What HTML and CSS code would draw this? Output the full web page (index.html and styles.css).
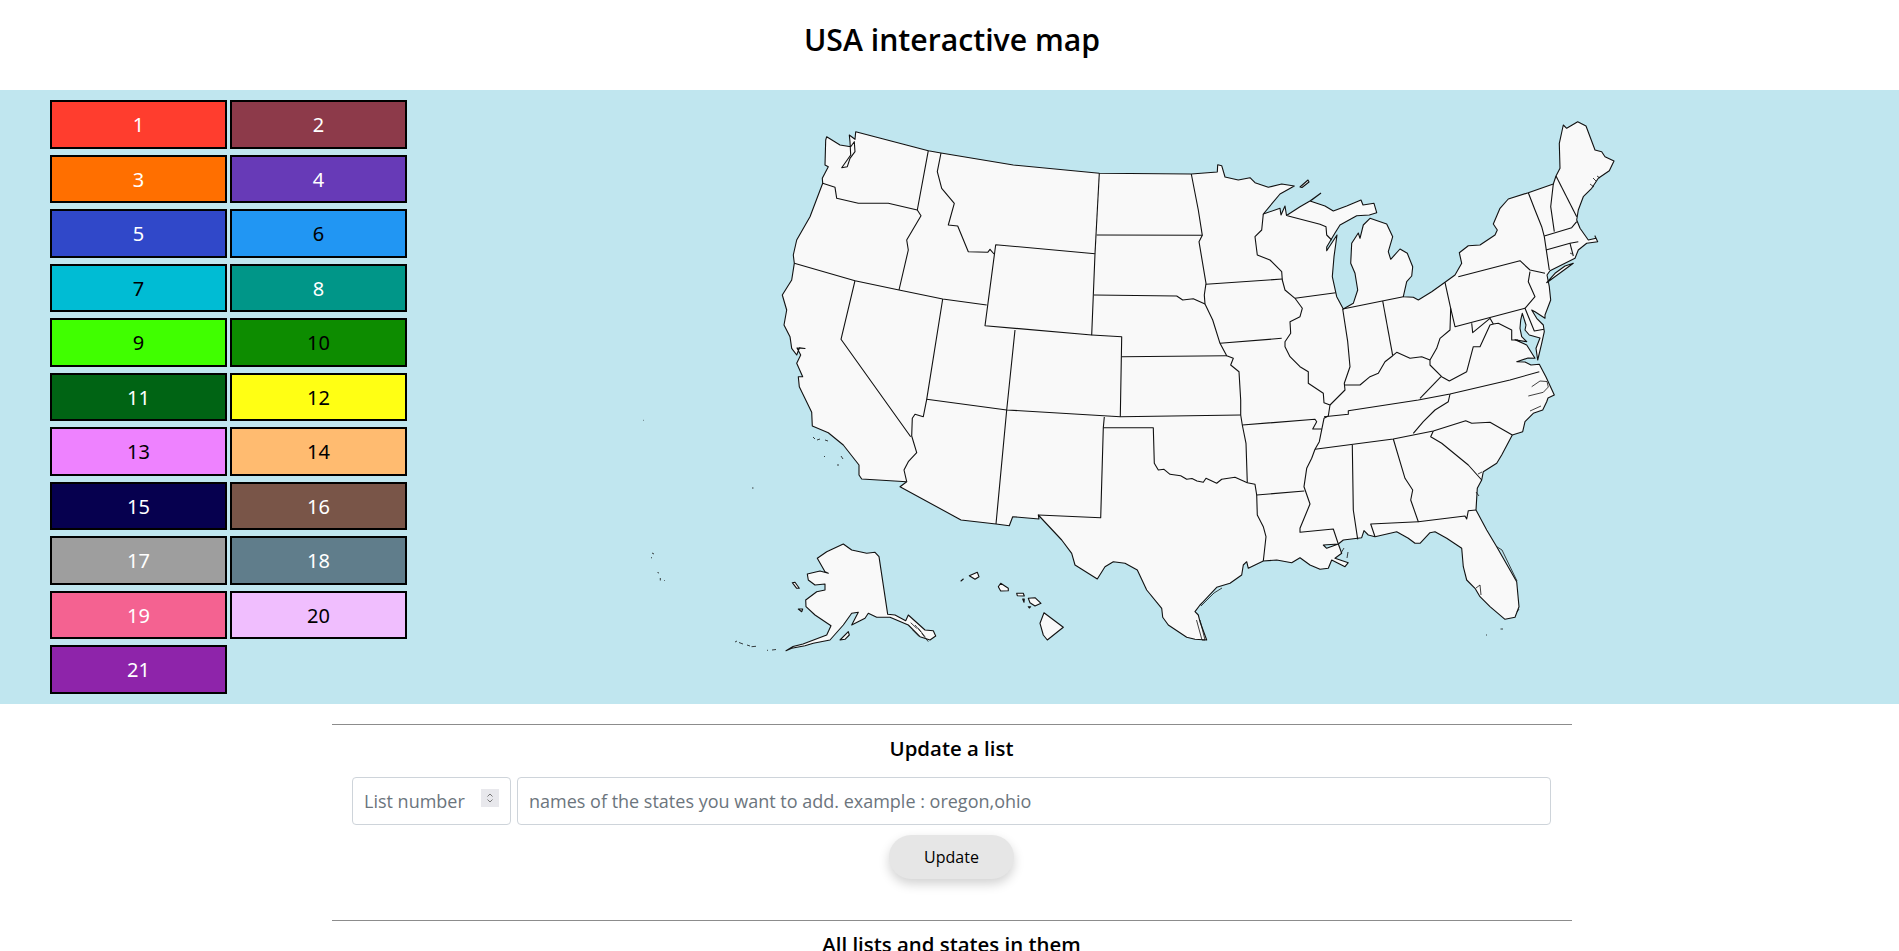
FILE: index.html
```html
<!DOCTYPE html>
<html lang="en">
<head>
    <meta charset="UTF-8">
    <meta name="viewport" content="width=device-width, initial-scale=1.0">
    <title>USA interactive map</title>
    <link rel="stylesheet" href="styles.css">
</head>
<body>
    <header class="page-title">
        <h1>USA interactive map</h1>
    </header>

    <div class="map-band">
        <div class="legend">
            <button class="list-btn c1">1</button>
            <button class="list-btn c2">2</button>
            <button class="list-btn c3">3</button>
            <button class="list-btn c4">4</button>
            <button class="list-btn c5">5</button>
            <button class="list-btn c6">6</button>
            <button class="list-btn c7">7</button>
            <button class="list-btn c8">8</button>
            <button class="list-btn c9">9</button>
            <button class="list-btn c10">10</button>
            <button class="list-btn c11">11</button>
            <button class="list-btn c12">12</button>
            <button class="list-btn c13">13</button>
            <button class="list-btn c14">14</button>
            <button class="list-btn c15">15</button>
            <button class="list-btn c16">16</button>
            <button class="list-btn c17">17</button>
            <button class="list-btn c18">18</button>
            <button class="list-btn c19">19</button>
            <button class="list-btn c20">20</button>
            <button class="list-btn c21">21</button>
        </div>

        <svg class="usa-map" viewBox="620 90 1030 613.5" width="1030" height="613.5">
            <!-- lower 48 outline, clockwise from the Washington / Canada corner -->
            <path class="land" d="M855.7 131.7 L928.3 150.7 941 153 1013.3 165 1099.3 173.3 1191.3 174 1217.3 172 1217.7 164.7 1221.7 165.7 1225 177 1238.3 180 1250 177.7 1255 182.7 1268.3 187.3 1281.7 184 1294.3 186 1280 194 1263.3 214 1280 208.3 1281 215 1285 206 1286.5 215.5 1300 206.7 1311.7 200 1320.7 193.3 1310 201 1325 206 1333.3 211 1346.7 206 1361 200 1363 205 1374 203.3 1376.7 212.7 1369.3 215 1356.7 215.7 1340 225 1335 233 1326.7 247 1326.7 250.7 1337 235 1334 256.7 1332.3 276.7 1336.7 296.7 1343.3 309 1353.3 303.3 1357.7 290 1355 273.3 1350.7 263.3 1351.7 243.3 1358.3 233 1360 238.3 1363.3 225 1370 218.3 1386.7 224 1392.7 236.7 1388.3 251.7 1390.7 259.3 1400 249 1407.3 253.3 1412.7 266.7 1411.7 276 1406.7 281.7 1403.3 296.7 1413.3 297.3 1418.3 300 1431.7 291.7 1445 282.3 1455 275 1461.7 263.3 1459.3 252.7 1468.3 245.7 1480 245 1495 235 1497.3 230 1493.3 224 1500 208.3 1508.3 199 1528.3 192.7 1553.3 184 1556 176 1560 168.3 1559.3 143.3 1563.3 125 1566.7 128.3 1577.7 121.7 1586 126 1595 150 1601.7 151.7 1605 156.7 1614 161 1609.3 170.7 1598.3 178.3 1591.7 188.3 1583.3 196.7 1578.3 210 1576.7 220 1580 228.3 1588.3 240 1596 238.3 1595 236 1597.7 241.7 1586.7 243.3 1578.3 250 1575 258.3 1550 270.7 1547 275 1549.3 286.7 1550.7 300 1545 315 1545 318.3 1535 311.7 1531.7 310 1536.7 318.3 1543.3 325 1544.3 331.7 1541.7 343.3 1537.7 360 1536 348.3 1540 338 1529.3 335 1525 330 1526 325 1522.3 313.3 1520.7 320 1520 328.3 1521.7 336.7 1526.7 341.7 1515 339.7 1526.7 345 1531.7 353 1535 358.3 1528 358 1516.7 361.7 1525 362 1531 365 1539.3 364.3 1546 377 1554.3 395 1548 398 1546.7 401.7 1542.7 410 1533.3 413.3 1525 421.7 1522.7 431.7 1512.3 435 1501.7 455 1496.7 463.3 1483.3 471.7 1481.7 480 1477.3 488.3 1476 510 1486.7 530 1496.7 546.7 1516.7 581.7 1519 606.7 1515 617.3 1505 619.3 1490 606.7 1480 596.7 1475 588.3 1466.7 580 1463.3 566.7 1461.7 548.3 1446.7 538.3 1435 531.7 1430 532.7 1420 543.3 1415 543.3 1408.3 538.3 1396.7 531.7 1375 536.7 1368.3 535 1364 530.7 1361.7 537.7 1343.3 540 1338.3 544 1323.3 545 1326.7 548.3 1338.3 544 1341.7 553.3 1335 558.3 1348.3 562.7 1345 566.7 1331.7 560 1328.3 568.3 1320 569.3 1310 565 1300 557.7 1291.7 562.7 1276.7 560 1263.3 561 1248.3 568.3 1246.7 561.7 1243.3 565 1241.7 575 1230 583.3 1216.7 587.3 1203.3 601.7 1200 605 1195 611.7 1198.3 615 1200 621.7 1206.7 640 1195 639.3 1186.7 637.3 1168.3 625 1162.7 617.3 1161.7 608.3 1146.7 590 1137.3 570 1125 563.3 1113.3 561.7 1105 566.7 1097.3 579 1075 565 1071.7 553.3 1061.7 540 1038.3 515 1039 519 1012.7 516.7 1009.3 525.7 996 524 961 520 900 486.7 906.7 481.7 861.7 479 859 475 859 465 843.3 445 828.3 432.7 812.3 426 811.7 412.3 799.3 386.7 798.3 376.7 802.7 376.7 796.7 363.3 800.7 355 797 348 805 348.5 799.5 347.7 796.7 355 791.7 348.3 790 336.7 784 325 786.7 310 782.3 295 791.7 280 794.3 263.3 793.3 255 796.7 240 810 216.7 822.7 183.3 822.3 178.3 828.3 166.7 825 165 825.7 140 826.7 136.7 840 145 850.7 146.7 854.3 141.7 855 151.7 850 158.3 847.3 166.7 841.7 167.7 850.7 155 850 141.7 849.3 135 855 139.3 Z"/>
            <!-- Alaska, Hawaii and the bigger islands -->
            <path class="land" d="M817.3 558.3 L826.7 551.7 843.3 544 851.7 550 866.7 553.3 875 552.3 879 556.7 887.7 614.3 895 615 905.7 620.7 908.3 615 925 630 933.3 630.7 935.7 636 930 640 920 636.7 908.3 625 890 617.3 876.7 617.3 868.3 613.3 865 618.3 851.7 625 858.3 612.3 851.7 613.3 843.3 625 830 640 813.3 643.3 805 645.7 791.7 648.3 786 650.7 793 646.5 803 644 826.7 635 831 625.7 815 615 806 606.7 805.7 600 816.7 591.7 825 590 825 584 815 585 808.3 580 807.3 574 820 571 828.3 573.3 825 571.7 817.3 558.3 Z"/>
            <path class="land" d="M840 640 L848.3 631.7 849.3 635 845 639.3 Z M792.3 582.7 L795 582.3 799.3 588.3 796.7 588.3 Z M798.3 609 L802.7 609 801.7 611.7 Z"/>
            <path class="land" d="M1044 612.7 L1063.3 627.3 1047.3 640 1043.3 635 1040 623.3 Z M1028.3 598.3 L1035 597.7 1041 603.3 1035 606 1030 602.7 Z M1016.7 593.3 L1023.3 593.3 1024.3 596 1017.3 595.7 Z M1022.7 599 L1024.3 599 1024 602.3 Z M1028.3 606.7 L1030.7 606.7 1029.3 608 Z M1000.7 583.3 L1008.3 588.3 1008.3 590.7 1000.7 591 998.3 586.7 Z M969.3 575.7 L977.3 572.3 979 576.7 975 579.3 Z M961 581 L963.3 579 Z"/>
            <path class="land" d="M1300 187 L1308 180 1309 182 1302 187.5 Z M1546.7 282.7 L1573.3 263.3 1565 266 1555 273.3 Z"/>

            <!-- state borders -->
            <g class="border">
                <path d="M822.7 183.3 L835 187.3 836.7 198.3 858.3 203.3 888.3 203.3 917.3 210"/>
                <path d="M928.3 150.7 L917.3 210 921 215.7 906.7 240 908.3 250 899 290"/>
                <path d="M941 153 L937.3 171.7 941.7 188.3 954.3 203.3 948.3 225 957.7 226 968.3 251.7 987.7 252.3 990 249.3 994 254"/>
                <path d="M995.7 244.7 L1095 253.7 1091.7 335 985 325.7 Z"/>
                <path d="M794.3 263.3 L855 280.7 899 290 942.7 299 986.7 305"/>
                <path d="M855 280.7 L841 339.3 910.7 436.7"/>
                <path d="M942.7 299 L926.7 399.3 923.3 416.7 915 414.3 912.3 418.3 911.7 436 916.7 452.7 908.3 461.7 904 470 906.7 481.7"/>
                <path d="M926.7 399.3 L1006.7 410 1120.3 416.7 1240.7 415"/>
                <path d="M1015 330 L1006.7 410 996 524"/>
                <path d="M1091.7 335 L1121.7 336.7 1120.3 416.7"/>
                <path d="M1104.3 417 L1103.3 427.7 1100.7 517.7 1038.3 515"/>
                <path d="M1103.3 427.7 L1153.3 427.7 1154.3 463.3 1158.3 470 1164 469.3 1170 474.3 1180.7 475.7 1186.7 479.3 1192 478.5 1197 481 1203.3 482.3 1206 478.3 1216.7 483.3 1221.7 479.3 1235 477.3 1247.3 482.7 1255 484.3 1256.7 495 1257.3 515 1263.3 526.7 1266 536.7 1263.3 561"/>
                <path d="M1240.7 415 L1242.3 425 1246 443.3 1247.3 482.7"/>
                <path d="M1256.7 495 L1304.3 491"/>
                <path d="M1242.3 425 L1315 419.3 1316.7 421.7 1312.7 429 1321.7 429"/>
                <path d="M1220 343.3 L1281.7 338.3"/>
                <path d="M1121.7 356.7 L1226.7 355.7"/>
                <path d="M1094 295 L1176.7 296 1182.7 300 1193.3 298.7 1205 304"/>
                <path d="M1096.7 235 L1202.3 235.3"/>
                <path d="M1099.3 173.3 L1095 253.7"/>
                <path d="M1191.3 174 L1198.3 210 1202.3 235.3 1199 241.7 1206 283.3 1204.3 295 1205 304 1212.7 320 1220 343.3 1226.7 355.7 1233.3 358.3 1230.7 365 1239 371.7 1240.7 400 1240.7 415"/>
                <path d="M1206 284.3 L1282.3 279"/>
                <path d="M1263.3 214 L1261.7 230 1255 236.7 1257.3 255 1270 260 1281.7 271.7 1282.3 280 1285 290 1295 298.3 1302.3 308.3 1300 316.7 1290 321.7 1290.7 333.3 1285 341.7 1285 346.7 1290 356.7 1300 366.7 1308.3 371.7 1308.3 383.3 1323.3 393.3 1324 402.7 1330 405 1328.3 416 1324 418.3 1319.3 441.7 1315 449.3 1311.7 458.3 1306.7 468.3 1304 486.7 1310 504 1300 528.3 1300 532.3 1333.3 529 1338.3 544"/>
                <path d="M1295 298.3 L1335.7 292.7"/>
                <path d="M1287.3 215.7 L1320 224.3 1326 226.7 1326.7 235 1331.7 240"/>
                <path d="M1342.7 309 L1347.7 341.7 1350 366.7 1344.3 383.3 1345 390 1340 395 1330 405"/>
                <path d="M1344.3 385 L1360 385 1370 376.7 1378.3 373.3 1385 361.7 1392.7 355.7 1396.7 352.3 1410 358.3 1421.7 356.7 1430 360"/>
                <path d="M1342.7 309 L1403.3 296.7"/>
                <path d="M1382.7 301 L1392.7 355.7"/>
                <path d="M1445 282.3 L1450.7 308.3 1450 330 1440 338.3 1436.7 348.3 1430 360 1430 365 1441.7 376.7 1449.3 381 1466.7 371.7 1473.3 346.7 1480 346.7 1490 325 1493.3 324"/>
                <path d="M1450.7 308.3 L1455 326.7 1525 308.3"/>
                <path d="M1458.3 276.7 L1520 260.7 1530 270 1545 273.3"/>
                <path d="M1530 271.7 L1528.3 281.7 1535 296.7 1525 308.3 1534.3 331 1544 329.3"/>
                <path d="M1471.7 323.3 L1472.7 332.7 1490 318.3 1493.3 324 1498.3 323.3 1511.7 330 1511.7 340 1518 340"/>
                <path d="M1528.3 192.7 L1535 210 1541.7 226.7 1544.3 236.7 1549.3 270"/>
                <path d="M1553.3 184 L1550.7 206.7 1554.3 231.7"/>
                <path d="M1556 176 L1576.7 216.7"/>
                <path d="M1544.3 236 L1571.7 227.7 1576.7 221.7"/>
                <path d="M1546 250 L1570 243.3 1578.3 241.7"/>
                <path d="M1570 243.3 L1573.3 256"/>
                <path d="M1324 416.7 L1348.3 414.3 1348.3 410.7 1418.3 400 1450 394 1510 380 1539.3 371.7"/>
                <path d="M1441 376.7 L1420 398.3"/>
                <path d="M1450 394 L1448.3 401.7 1435 410 1423.3 421.7 1413.3 433.3"/>
                <path d="M1315 449.3 L1393.3 439 1433.3 431 1465.7 420.7 1471.7 423.3 1490 422.3 1512.3 435"/>
                <path d="M1433.3 431 L1430.7 436.7 1441.7 443.3 1468.3 465 1481.7 480"/>
                <path d="M1352.3 445 L1353.3 510 1357.7 539.3"/>
                <path d="M1393.3 439 L1405 478.3 1412.7 490 1410.7 500 1418.3 521.7 1465 516 1466.7 519 1468.3 510.7 1476 510"/>
                <path d="M1418.3 521.7 L1370.7 524 1375 536.7"/>
            </g>

            <!-- sounds, barrier islands, keys, small specks -->
            <g class="border fine">
                <path d="M1531.7 386.7 L1540 381 1547 381.5 1548.3 387 1543.3 392.3 1528.3 396"/>
                <path d="M1530 411 L1541 406"/>
                <path d="M1196.5 620 L1202 640 1205 640 1200 620"/>
                <path d="M1496.7 546.7 L1502 550 1517 581"/>
                <path d="M1201 606 L1214 593 1222 588"/>
                <path d="M1476 492 L1479 496 M1478 474 L1482 472"/>
                <path d="M1476 588 L1480 585 1481 595"/>
                <path d="M1341 553 L1344 548 M1348 552 L1347 558"/>
                <path d="M910.7 622.7 L916.7 628.3 M912.7 630 L919.3 636.7 M918.3 628.3 L925 636.7 M921.7 633.3 L928.3 641.7 M915 625 L921 632"/>
                <path d="M813 437 L815 439 M817 440 L820 439 M825 440 L828 441 M824 456 L825 457 M841 456 L843 459 M838 464 L838 466"/>
                <path d="M1517 612 L1519 609 M1570 253 L1572 254"/>
                <path d="M1593 178 L1596 181 M1590 184 L1594 187 M1597 176 L1600 178"/>
                <path d="M652 553 L654 554 M651 557.5 L652 558 M657.5 572.5 L659 573 M660.3 578 L660.3 580.5 M664 580.5 L664.7 580.5"/>
                <path d="M735 642 L737 641 M739 642.5 L743 644 M747 645 L750 646 M751.5 646.7 L756 646.3 M767 650.3 L768 650.3 M772 650 L776 649.5"/>
                <path d="M643 420.3 L643.6 420.3 M752 488 L753.5 488"/>
                <path d="M1500.5 629 L1503 629 M1486 635 L1487 635"/>
            </g>
        </svg>
    </div>

    <main class="panel">
        <section class="panel-section update-section">
            <h3>Update a list</h3>
            <div class="update-row">
                <input class="field field-number" type="number" placeholder="List number">
                <input class="field field-states" type="text" placeholder="names of the states you want to add. example : oregon,ohio">
            </div>
            <button class="update-btn">Update</button>
        </section>

        <section class="panel-section">
            <h3>All lists and states in them</h3>
        </section>
    </main>
</body>
</html>
```

FILE: styles.css
```css
* {
    box-sizing: border-box;
}

body {
    margin: 0;
    font-family: 'Open Sans', sans-serif;
    color: #000;
    background: #fff;
}

/* Title */
.page-title {
    height: 90px;
    padding: 20px 0 0 5px;
    text-align: center;
}

.page-title h1 {
    margin: 0;
    font-size: 30.2px;
    font-weight: 600;
    line-height: 40px;
}

/* Map band */
.map-band {
    display: flex;
    height: 613.5px;
    background: #c0e6ef;
}

.legend {
    display: grid;
    grid-template-columns: 177px 177px;
    grid-auto-rows: 48.5px;
    column-gap: 3px;
    row-gap: 6px;
    align-content: start;
    padding: 10px 0 0 50px;
}

.list-btn {
    border: 2px solid #000;
    border-radius: 0;
    padding: 1px 0 0;
    font-family: 'Noto Sans', sans-serif;
    font-size: 20px;
    color: #fff;
    cursor: pointer;
}

.c1 { background: #ff3d2e; }
.c2 { background: #8d3a4a; }
.c3 { background: #ff6f00; }
.c4 { background: #673ab7; }
.c5 { background: #3048c9; }
.c6 { background: #2196f3; color: #000; }
.c7 { background: #00bcd4; color: #000; }
.c8 { background: #009688; }
.c9 { background: #40ff00; color: #000; }
.c10 { background: #0d8c00; color: #000; }
.c11 { background: #006414; }
.c12 { background: #ffff14; color: #000; }
.c13 { background: #ee82ff; color: #000; }
.c14 { background: #ffbb70; color: #000; }
.c15 { background: #06004f; }
.c16 { background: #795548; }
.c17 { background: #9e9e9e; }
.c18 { background: #607d8b; }
.c19 { background: #f46291; }
.c20 { background: #f0befe; color: #000; }
.c21 { background: #8e24aa; }

.usa-map {
    display: block;
    flex: none;
    margin-left: 213px;
}

.land {
    fill: #f9f9f9;
    stroke: #111;
    stroke-width: 1.1;
    stroke-linejoin: round;
}

.border {
    fill: none;
    stroke: #111;
    stroke-width: 1.1;
    stroke-linejoin: round;
}

.border.fine {
    stroke-width: 0.8;
}

/* Form part under the map */
.panel {
    width: 1240px;
    margin-left: 332px;
    padding-top: 20px;
}

.panel-section {
    border-top: 1px solid #8c8c8c;
    padding: 10px 21px 0 20px;
    text-align: center;
}

.panel-section h3 {
    margin: 0;
    font-size: 20.4px;
    font-weight: 600;
    line-height: 27px;
}

.update-section {
    height: 196px;
}

.update-row {
    display: flex;
    gap: 6px;
    margin-top: 15px;
}

.field {
    height: 48px;
    padding: 6px 11px;
    border: 1px solid #ced4da;
    border-radius: 4px;
    font-family: 'Open Sans', sans-serif;
    font-size: 18px;
    color: #495057;
    background: #fff;
}

.field::placeholder {
    color: #6c757d;
}

.field-number {
    width: 159px;
}

/* always visible spinner, grey box with two small chevrons */
.field-number::-webkit-inner-spin-button {
    -webkit-appearance: none;
    appearance: none;
    width: 18px;
    height: 18px;
    opacity: 1;
    background: #e8e8ec url("data:image/svg+xml,%3Csvg xmlns='http://www.w3.org/2000/svg' width='18' height='18'%3E%3Cpath d='M6.5 7.5 9 5l2.500 2.500M6.500 10.500 9 13l2.500-2.500' fill='none' stroke='%23777' stroke-width='1'/%3E%3C/svg%3E") center no-repeat;
}

.field-states {
    flex: 1;
}

.update-btn {
    display: block;
    width: 125px;
    height: 44px;
    margin: 10px auto 0;
    border: none;
    border-radius: 22px;
    background: #e6e6e6;
    font-family: 'Open Sans', sans-serif;
    font-size: 16px;
    color: #000;
    box-shadow: 0 5px 11px rgba(0, 0, 0, 0.18);
    cursor: pointer;
}
```
